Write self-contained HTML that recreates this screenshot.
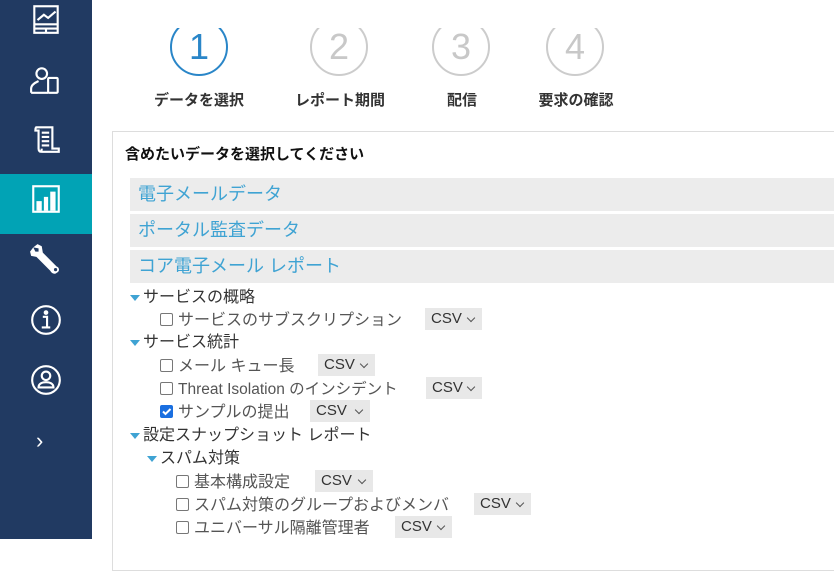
<!DOCTYPE html>
<html><head><meta charset="utf-8"><style>
*{margin:0;padding:0;box-sizing:border-box}
body{width:834px;height:539px;overflow:hidden;background:#fff;font-family:"Liberation Sans","Noto Sans CJK JP",sans-serif;position:relative}
.side{position:absolute;left:0;top:0;width:92px;height:539px;background:#213a62}
.act{position:absolute;left:0;top:174px;width:92px;height:60px;background:#01a3b5}
.ic{position:absolute;left:29px;width:34px;height:34px}
.a{position:absolute;white-space:nowrap}
.circ{position:absolute;width:58px;height:58px;border-radius:50%;border:2px solid #ccc;color:#c8c8c8;font-size:36px;text-align:center;line-height:54px}
.lab{position:absolute;top:89px;font-size:15px;font-weight:bold;color:#333;transform:translateX(-50%)}
.panel{position:absolute;left:112px;top:131px;width:730px;height:440px;border:1px solid #ddd}
.bar{position:absolute;left:130px;width:704px;height:33px;background:#ececec;color:#3fa3d3;font-size:18px;line-height:33px;padding-left:8px}
.t{position:absolute;font-size:16px;color:#333;line-height:20px;white-space:nowrap}
.tri{position:absolute;width:0;height:0;border-left:5px solid transparent;border-right:5px solid transparent;border-top:6px solid #3fa3d3}
.cb{position:absolute;width:13px;height:13px;border:1.5px solid #777;border-radius:2px;background:#fff}
.cb.on{background:#1a6fe0;border-color:#1a6fe0}
.sel{position:absolute;height:22px;background:#e8e8e8;font-size:15px;color:#333;line-height:22px;padding-left:6px}
.sel:after{content:"";position:absolute;right:8px;top:7px;width:5px;height:5px;border-right:1.5px solid #555;border-bottom:1.5px solid #555;transform:rotate(45deg)}
</style></head><body>
<div class="side">
<div class="act"></div>
<svg class="ic" style="top:2px" viewBox="0 0 32 32" fill="none" stroke="#fff" stroke-width="2"><rect x="5" y="4" width="22" height="25"/><path d="M5 21h22M5 25h22M16 25v4M8 17l6-5 4 3 7-6"/></svg>
<svg class="ic" style="top:63px" viewBox="0 0 32 32" fill="none" stroke="#fff" stroke-width="2"><circle cx="12" cy="10" r="5"/><path d="M2 28v-4c0-4 5-6 7-7M2 28h16"/><rect x="18" y="14" width="9" height="14" rx="1"/></svg>
<svg class="ic" style="top:122px" viewBox="0 0 32 32" fill="none" stroke="#fff" stroke-width="2"><path d="M6 5h16v20h6v3H12c-2 0-3-1-3-3V8H6c0-2 0-3 2-3M10 28c2 0 2-2 2-3M12 10h7M12 14h7M12 18h7M12 22h7"/></svg>
<svg class="ic" style="top:182px" viewBox="0 0 32 32" fill="none" stroke="#fff"><rect x="4" y="4" width="24" height="24" stroke-width="2"/><path d="M7 27V18h5v9M14 27V14h4v13M20 27V9h5v18" fill="#fff" stroke="none"/></svg>
<svg class="ic" style="top:242px" viewBox="0 0 32 32" fill="#fff"><path d="M4 5l4-3 4 2 1 6 13 13c3 1 3 5 0 6-2 2-5 0-6-2L7 14l-5-1-1-4 3-4 2 4 3 0 0-3z"/><circle cx="25" cy="26" r="1.5" fill="#213a62"/></svg>
<svg class="ic" style="top:303px" viewBox="0 0 32 32" fill="none" stroke="#fff" stroke-width="2"><circle cx="16" cy="16" r="13"/><circle cx="16" cy="9" r="1.2" fill="#fff"/><path d="M13 13h4v10M12 23h8"/></svg>
<svg class="ic" style="top:363px" viewBox="0 0 32 32" fill="none" stroke="#fff" stroke-width="2"><circle cx="16" cy="16" r="13"/><circle cx="16" cy="12" r="4"/><path d="M9 23c0-4 4-5 7-5s7 1 7 5zM9 23h14"/></svg>
<div class="a" style="left:36px;top:428px;color:#fff;font-size:22px">›</div>
</div>

<div style="position:absolute;left:92px;top:28px;width:742px;height:60px;overflow:hidden">
<div class="circ" style="left:78px;top:-10px;border-color:#2a86c8;color:#2a86c8">1</div>
<div class="circ" style="left:218px;top:-10px">2</div>
<div class="circ" style="left:340px;top:-10px">3</div>
<div class="circ" style="left:454px;top:-10px">4</div>
</div>
<div class="lab" style="left:199px">データを選択</div>
<div class="lab" style="left:340px">レポート期間</div>
<div class="lab" style="left:462px">配信</div>
<div class="lab" style="left:576px">要求の確認</div>

<div class="panel"></div>
<div class="a" style="left:125px;top:143px;font-size:15px;font-weight:bold;color:#111">含めたいデータを選択してください</div>
<div class="bar" style="top:178px">電子メールデータ</div>
<div class="bar" style="top:214px">ポータル監査データ</div>
<div class="bar" style="top:250px">コア電子メール レポート</div>

<div class="tri" style="left:130px;top:295px"></div><div class="t" style="left:143px;top:288px">サービスの概略</div>
<div class="cb" style="left:160px;top:313px"></div><div class="t" style="left:178px;top:311px;color:#555">サービスのサブスクリプション</div><div class="sel" style="left:425px;top:308px;width:57px">CSV</div>
<div class="tri" style="left:130px;top:340px"></div><div class="t" style="left:143px;top:333px">サービス統計</div>
<div class="cb" style="left:160px;top:359px"></div><div class="t" style="left:178px;top:357px;color:#555">メール キュー長</div><div class="sel" style="left:318px;top:354px;width:57px">CSV</div>
<div class="cb" style="left:160px;top:382px"></div><div class="t" style="left:178px;top:380px;color:#555;font-size:15.5px">Threat Isolation のインシデント</div><div class="sel" style="left:426px;top:377px;width:56px">CSV</div>
<div class="cb on" style="left:160px;top:405px"></div><svg class="a" style="left:161px;top:406px" width="11" height="11" viewBox="0 0 11 11"><path d="M2 5.5l2.5 2.5 5-5" stroke="#fff" stroke-width="2" fill="none"/></svg><div class="t" style="left:178px;top:403px;color:#555">サンプルの提出</div><div class="sel" style="left:310px;top:400px;width:60px">CSV</div>
<div class="tri" style="left:130px;top:433px"></div><div class="t" style="left:143px;top:426px">設定スナップショット レポート</div>
<div class="tri" style="left:147px;top:456px"></div><div class="t" style="left:160px;top:449px">スパム対策</div>
<div class="cb" style="left:176px;top:475px"></div><div class="t" style="left:194px;top:473px;color:#555">基本構成設定</div><div class="sel" style="left:315px;top:470px;width:58px">CSV</div>
<div class="cb" style="left:176px;top:498px"></div><div class="t" style="left:194px;top:496px;color:#555">スパム対策のグループおよびメンバ</div><div class="sel" style="left:474px;top:493px;width:57px">CSV</div>
<div class="cb" style="left:176px;top:521px"></div><div class="t" style="left:194px;top:519px;color:#555">ユニバーサル隔離管理者</div><div class="sel" style="left:395px;top:516px;width:57px">CSV</div>
</body></html>
